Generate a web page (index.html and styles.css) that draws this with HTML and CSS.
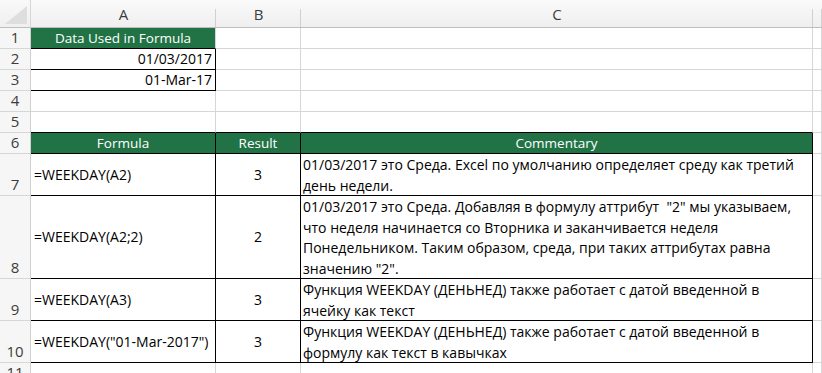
FILE: index.html
```html
<!DOCTYPE html>
<html>
<head>
<meta charset="utf-8">
<link rel="stylesheet" href="styles.css">
</head>
<body>
<div class="sheet">
  <div class="corner"><svg class="tri" width="22" height="18" viewBox="0 0 22 18"><polygon points="22,0 22,18 0,18" fill="#dedede"/></svg></div>
  <div class="ch">A</div>
  <div class="ch">B</div>
  <div class="ch">C</div>
  <div class="ch last"></div>

  <div class="rh">1</div>
  <div class="c green bk-b center">Data Used in Formula</div>
  <div class="c"></div>
  <div class="c"></div>
  <div class="c"></div>

  <div class="rh">2</div>
  <div class="c bk-b bk-r right">01/03/2017</div>
  <div class="c"></div>
  <div class="c"></div>
  <div class="c"></div>

  <div class="rh">3</div>
  <div class="c bk-b bk-r right">01-Mar-17</div>
  <div class="c"></div>
  <div class="c"></div>
  <div class="c"></div>

  <div class="rh">4</div>
  <div class="c"></div>
  <div class="c"></div>
  <div class="c"></div>
  <div class="c"></div>

  <div class="rh">5</div>
  <div class="c bk-b"></div>
  <div class="c bk-b"></div>
  <div class="c bk-b"></div>
  <div class="c"></div>

  <div class="rh">6</div>
  <div class="c green bk-b bk-r center">Formula</div>
  <div class="c green bk-b bk-r center">Result</div>
  <div class="c green bk-b bk-r center">Commentary</div>
  <div class="c"></div>

  <div class="rh">7</div>
  <div class="c bk-b bk-r mid">=WEEKDAY(A2)</div>
  <div class="c bk-b bk-r mid center">3</div>
  <div class="c bk-b bk-r note">01/03/2017 это Среда. Excel по умолчанию определяет среду как третий день недели.</div>
  <div class="c"></div>

  <div class="rh">8</div>
  <div class="c bk-b bk-r mid">=WEEKDAY(A2;2)</div>
  <div class="c bk-b bk-r mid center">2</div>
  <div class="c bk-b bk-r note">01/03/2017 это Среда. Добавляя в формулу аттрибут &nbsp;"2" мы указываем, что неделя начинается со Вторника и заканчивается неделя Понедельником. Таким образом, среда, при таких аттрибутах равна значению "2".</div>
  <div class="c"></div>

  <div class="rh">9</div>
  <div class="c bk-b bk-r mid">=WEEKDAY(A3)</div>
  <div class="c bk-b bk-r mid center">3</div>
  <div class="c bk-b bk-r note">Функция WEEKDAY (ДЕНЬНЕД) также работает с датой введенной в ячейку как текст</div>
  <div class="c"></div>

  <div class="rh">10</div>
  <div class="c bk-b bk-r mid">=WEEKDAY("01-Mar-2017")</div>
  <div class="c bk-b bk-r mid center">3</div>
  <div class="c bk-b bk-r note">Функция WEEKDAY (ДЕНЬНЕД) также работает с датой введенной в формулу как текст в кавычках</div>
  <div class="c"></div>

  <div class="rh">11</div>
  <div class="c"></div>
  <div class="c"></div>
  <div class="c"></div>
  <div class="c"></div>
</div>
</body>
</html>
```
FILE: styles.css
```css
html, body {
  margin: 0;
  padding: 0;
  background: #fff;
  overflow: hidden;
}
.sheet {
  width: 822px;
  height: 373px;
  overflow: hidden;
  display: grid;
  grid-template-columns: 31px 185px 85px 512px 1fr;
  grid-template-rows: 28px 21px 21px 21px 21px 21px 21px 42px 83px 42px 42px 21px;
  font-family: "Open Sans", "Liberation Sans", sans-serif;
  font-size: 14px;
  color: #000;
}
.sheet > div {
  box-sizing: border-box;
  border-right: 1px solid #d6d6d6;
  border-bottom: 1px solid #d6d6d6;
  min-width: 0;
}
.corner {
  background: linear-gradient(#f9f9f9, #efefef);
  border-bottom-color: #bdbdbd !important;
  position: relative;
}
.tri {
  position: absolute;
  right: 3px;
  bottom: 3px;
}
.ch {
  background: linear-gradient(#fafafa, #efefef);
  border-bottom-color: #bdbdbd !important;
  border-right: none !important;
  position: relative;
  display: flex;
  align-items: center;
  justify-content: center;
  font-size: 15px;
  color: #3c3c3c;
  padding-top: 1px;
}
.ch::after {
  content: "";
  position: absolute;
  right: 0;
  top: 9px;
  bottom: 0;
  width: 1px;
  background: #d0d0d0;
}
.rh {
  background: #f6f6f6;
  border-right-color: #cfcfcf !important;
  display: flex;
  align-items: flex-end;
  justify-content: center;
  padding-bottom: 1px;
  font-size: 15px;
  color: #3c3c3c;
  line-height: 20px;
}
.c {
  padding: 0 3px;
  white-space: nowrap;
  line-height: 20px;
}
.green {
  background: #217346;
  color: #fff;
  font-size: 13.5px;
}
.bk-b { border-bottom-color: #000 !important; }
.bk-r { border-right-color: #000 !important; }
.center { text-align: center; }
.right { text-align: right; }
.mid {
  display: flex;
  align-items: center;
}
.mid.center { justify-content: center; }
.note {
  white-space: normal;
  padding: 1px 2px 0 2px;
  line-height: 20.5px;
}
```
